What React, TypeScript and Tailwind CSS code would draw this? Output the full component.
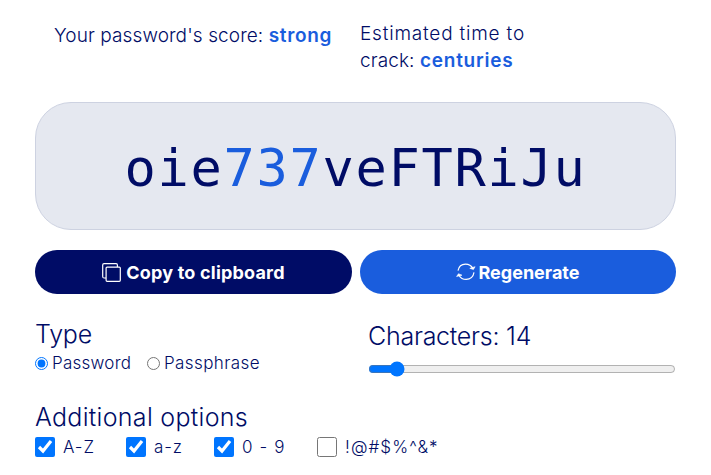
import React, { useState } from "react";

function CopyIcon() {
  return (
    <svg width="19" height="19" viewBox="0 0 19 19" fill="none" stroke="white" strokeWidth="1.2" className="shrink-0">
      <rect x="4.1" y="4.1" width="14.2" height="14.2" rx="1" />
      <path d="M4 15H2.1Q.7 15 .7 13.6V2.1Q.7.7 2.1.7h12Q15.4.7 15.4 2v2" />
    </svg>
  );
}

function RegenerateIcon() {
  return (
    <svg width="20" height="18" viewBox="0 0 20 18" fill="none" stroke="white" strokeWidth="1.2" className="shrink-0">
      <path d="M2 7.6C2.7 3.8 5.7 1.1 9.5 1.1c3.2 0 5.9 1.6 7.3 4.3M18 9.4c-.6 4.2-3.8 7-7.8 7-3.2 0-5.8-1.6-7.2-4.2" />
      <path d="M13.8 5.3l3.6 1.3 1.7-2.9zM6 12.2l-3.5-1.5-1.9 2.8z" fill="white" strokeWidth=".6" />
    </svg>
  );
}

function Check({ label, on, className, text }: { label: string; on: boolean; className: string; text: string }) {
  return (
    <label className={"flex items-center gap-2 " + className}>
      <input type="checkbox" defaultChecked={on} className="h-5 w-5 shrink-0 accent-[#0075ff]" />
      <span className={"whitespace-nowrap " + text}>{label}</span>
    </label>
  );
}

export default function App() {
  const [length, setLength] = useState(14);
  return (
    <main className="h-[475px] w-[711px] overflow-hidden bg-white px-[35px] font-['Inter',sans-serif] font-light text-[#000c66]">
      <div className="flex h-[102px] pt-5 leading-[27px]">
        <p className="w-[325px] whitespace-nowrap pl-[19px] pt-[2px] text-[19px] tracking-[0.1px]">
          Your password's score: <b className="font-semibold tracking-[0.65px] text-[#1a5ddd]">strong</b>
        </p>
        <p className="whitespace-nowrap text-[19px] tracking-[0.1px]">
          <span className="tracking-[0.8px]">Estimated time to</span><br />
          crack: <b className="font-semibold tracking-[0.75px] text-[#1a5ddd]">centuries</b>
        </p>
      </div>

      <div className="flex h-32 w-[641px] items-center justify-center rounded-[36px] border border-[#cdd2e1] bg-[#e5e8f0] pt-[3px]">
        <span className="font-['DejaVu_Sans_Mono',monospace] text-[52px] font-normal leading-[60px] tracking-[1.7px]">
          oie<span className="text-[#1a5ddd]">737</span>veFTRiJu
        </span>
      </div>

      <div className="mt-5 flex gap-2 text-[18px] font-bold text-white">
        <button className="flex h-11 w-[317px] items-center justify-center gap-[5px] rounded-full bg-[#000c66]">
          <CopyIcon />
          <span className="whitespace-nowrap pt-px tracking-[0.2px]">Copy to clipboard</span>
        </button>
        <button className="flex h-11 w-[316px] items-center justify-center gap-[2px] rounded-full bg-[#1a5ddd]">
          <RegenerateIcon />
          <span className="whitespace-nowrap pt-px">Regenerate</span>
        </button>
      </div>

      <div className="flex h-[102px] pt-6">
        <section className="w-[333px]">
          <h2 className="text-[25px] leading-8 tracking-[-0.2px]">Type</h2>
          <div className="flex items-center pt-[1px] text-[17px] leading-6">
            <label className="flex w-28 items-center gap-[4px]">
              <input type="radio" name="kind" defaultChecked className="h-[13px] w-[13px] accent-[#0075ff]" />
              <span className="tracking-[0.25px]">Password</span>
            </label>
            <label className="flex items-center gap-[4px]">
              <input type="radio" name="kind" className="h-[13px] w-[13px] accent-[#0075ff]" />
              <span className="tracking-[0.4px]">Passphrase</span>
            </label>
          </div>
        </section>
        <section className="w-[308px] pt-[2px]">
          <h2 className="whitespace-nowrap text-[25px] leading-8 tracking-[-0.25px]">Characters: {length}</h2>
          <input
            type="range"
            min={8}
            max={93}
            value={length}
            onChange={(e) => setLength(Number(e.target.value))}
            className="mt-[9px] block h-4 w-[308px] accent-[#0075ff]"
          />
        </section>
      </div>

      <section className="pt-[5px]">
        <h2 className="whitespace-nowrap text-[25px] leading-8 tracking-[0.3px]">Additional options</h2>
        <div className="flex items-center pt-[2px] text-[17px] leading-6">
          <Check label="A-Z" on className="w-[91px]" text="tracking-[1px]" />
          <Check label="a-z" on className="w-[88px]" text="tracking-[0.8px]" />
          <Check label="0 - 9" on className="w-[103px]" text="tracking-[1.1px]" />
          <Check label="!@#$%^&*" on={false} className="" text="tracking-[1.1px]" />
        </div>
      </section>
    </main>
  );
}
